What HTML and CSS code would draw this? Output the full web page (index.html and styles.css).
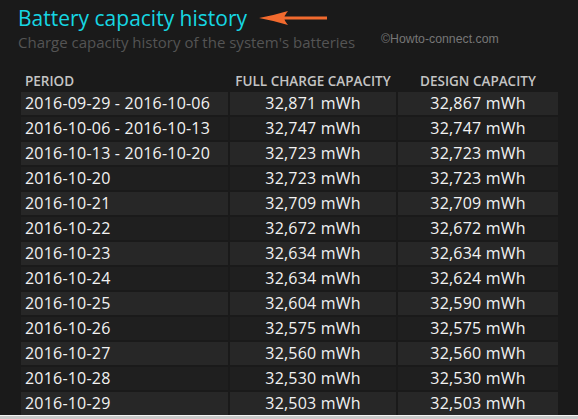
FILE: index.html
```html
<!DOCTYPE html>
<html lang="en">
<head>
<meta charset="utf-8">
<title>Battery capacity history</title>
<link rel="stylesheet" href="styles.css">
</head>
<body>
<div class="page">
  <h1 class="title">Battery capacity history</h1>
  <p class="subtitle">Charge capacity history of the system's batteries</p>
  <svg class="arrow" width="72" height="16" viewBox="0 0 72 16">
    <path d="M0 7 Q14 4.5 29 0 Q26 4 25.5 5.5 L68 5.5 L68 8.5 L25.5 8.5 Q26 10 29 14 Q14 9.5 0 7 Z" fill="#f26a2e"/>
  </svg>
  <div class="watermark">©Howto-connect.com</div>
  <table class="history">
    <thead>
      <tr><th class="c-period">PERIOD</th><th class="c-full">FULL CHARGE CAPACITY</th><th class="c-design">DESIGN CAPACITY</th></tr>
    </thead>
    <tbody>
      <tr><td class="date">2016-09-29 - 2016-10-06</td><td>32,871 mWh</td><td>32,867 mWh</td></tr>
      <tr><td class="date">2016-10-06 - 2016-10-13</td><td>32,747 mWh</td><td>32,747 mWh</td></tr>
      <tr><td class="date">2016-10-13 - 2016-10-20</td><td>32,723 mWh</td><td>32,723 mWh</td></tr>
      <tr><td class="date">2016-10-20</td><td>32,723 mWh</td><td>32,723 mWh</td></tr>
      <tr><td class="date">2016-10-21</td><td>32,709 mWh</td><td>32,709 mWh</td></tr>
      <tr><td class="date">2016-10-22</td><td>32,672 mWh</td><td>32,672 mWh</td></tr>
      <tr><td class="date">2016-10-23</td><td>32,634 mWh</td><td>32,634 mWh</td></tr>
      <tr><td class="date">2016-10-24</td><td>32,634 mWh</td><td>32,624 mWh</td></tr>
      <tr><td class="date">2016-10-25</td><td>32,604 mWh</td><td>32,590 mWh</td></tr>
      <tr><td class="date">2016-10-26</td><td>32,575 mWh</td><td>32,575 mWh</td></tr>
      <tr><td class="date">2016-10-27</td><td>32,560 mWh</td><td>32,560 mWh</td></tr>
      <tr><td class="date">2016-10-28</td><td>32,530 mWh</td><td>32,530 mWh</td></tr>
      <tr><td class="date">2016-10-29</td><td>32,503 mWh</td><td>32,503 mWh</td></tr>
    </tbody>
  </table>
</div>
<div class="edge"></div>
</body>
</html>
```
FILE: styles.css
```css
html, body {
  margin: 0;
  padding: 0;
  background: #1a1a1a;
  height: 100%;
  overflow: hidden;
}
body {
  font-family: "Open Sans", "Noto Sans", sans-serif;
  color: #f0f0f0;
}
.page {
  position: relative;
  padding: 4px 0 0 18px;
}
.title {
  margin: 0;
  font-size: 21px;
  line-height: 28px;
  font-weight: 400;
  color: #16d6e2;
}
.subtitle {
  margin: 0;
  font-size: 15px;
  line-height: 20px;
  color: #545454;
}
.arrow {
  position: absolute;
  left: 259px;
  top: 11px;
}
.watermark {
  position: absolute;
  left: 381px;
  top: 31px;
  font-family: "Liberation Sans", Arial, sans-serif;
  font-size: 12.3px;
  line-height: 16px;
  color: #767676;
}
.history {
  margin: 14px 0 0 1px;
  border-collapse: separate;
  border-spacing: 2px;
}
.history th {
  height: 22px;
  padding: 4px 0 0 0;
  box-sizing: border-box;
  font-size: 13.5px;
  line-height: 18px;
  font-weight: 600;
  color: #c4c4c4;
  text-align: center;
  vertical-align: top;
}
.history th.c-period {
  text-align: left;
  padding-left: 4px;
}
.c-period { width: 207px; }
.c-full { width: 166px; }
.c-design { width: 160px; }
.history td {
  height: 23px;
  padding: 0;
  font-size: 16px;
  line-height: 23px;
  letter-spacing: 0.2px;
  text-align: center;
  white-space: nowrap;
  color: #f2f2f2;
}
.history td.date {
  text-align: left;
  padding-left: 4px;
}
.history tbody tr:nth-child(odd) td { background: #272727; }
.history tbody tr:nth-child(even) td { background: #1f1f1f; }
.edge {
  position: fixed;
  left: 0;
  right: 0;
  bottom: 0;
  height: 3px;
  background: #c9c9c9;
  border-top: 1px solid #f4f4f4;
}
```
